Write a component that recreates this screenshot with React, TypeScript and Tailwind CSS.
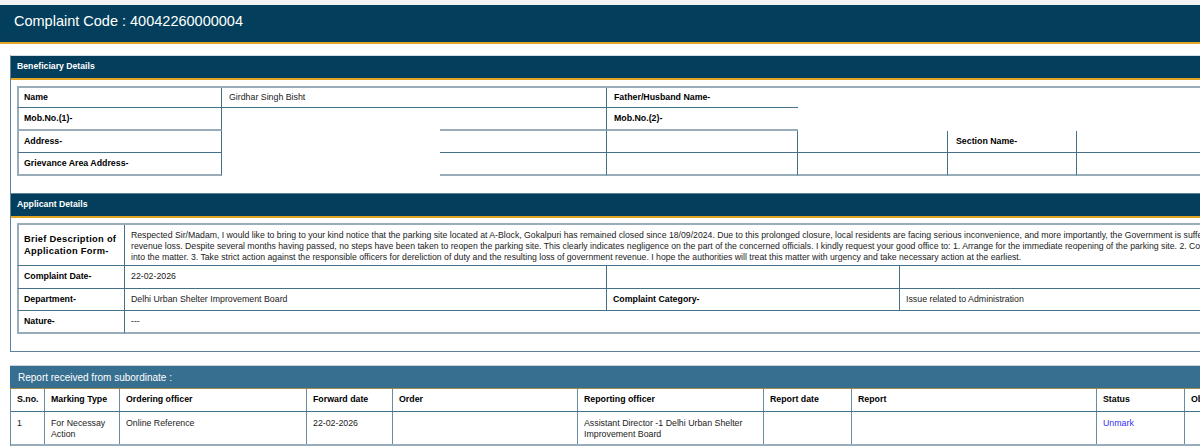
import React from 'react';

// Borders used by the legacy detail tables
const TEAL_B = 'border-b border-b-[#44708a]';
const GREY_B = 'border-b-2 border-b-[#98adb9]';
const TEAL_R = 'border-r border-r-[#44708a]';
const GREY_L = 'border-l-2 border-l-[#98adb9]';

const descriptionLines = [
  'Respected Sir/Madam, I would like to bring to your kind notice that the parking site located at A-Block, Gokalpuri has remained closed since 18/09/2024. Due to this prolonged closure, local residents are facing serious inconvenience, and more importantly, the Government is suffering',
  'revenue loss. Despite several months having passed, no steps have been taken to reopen the parking site. This clearly indicates negligence on the part of the concerned officials. I kindly request your good office to: 1. Arrange for the immediate reopening of the parking site. 2. Conduct an inquiry',
  'into the matter. 3. Take strict action against the responsible officers for dereliction of duty and the resulting loss of government revenue. I hope the authorities will treat this matter with urgency and take necessary action at the earliest.',
];

const reportHeaders = [
  'S.no.',
  'Marking Type',
  'Ordering officer',
  'Forward date',
  'Order',
  'Reporting officer',
  'Report date',
  'Report',
  'Status',
  'Observation',
];

function Cell({ className = '', children }: { className?: string; children?: React.ReactNode }) {
  return <div className={`flex items-center pl-[7px] ${className}`}>{children}</div>;
}

function Label({ children }: { children: React.ReactNode }) {
  return <span className="font-bold text-black">{children}</span>;
}

function PanelHeader({ title }: { title: string }) {
  return (
    <div className="h-[24px] bg-[#033f5c] border-b-2 border-[#e2a523] flex items-center pl-[6px]">
      <span className="text-[8.7px] font-bold text-white">{title}</span>
    </div>
  );
}

function BeneficiaryTable() {
  return (
    <div className="grid grid-cols-[205px_218px_167px_191px_150px_129px_240px] grid-rows-[20px_23px_22px_23px] border-t-2 border-[#98adb9] text-[8.8px]">
      {/* row 1 */}
      <Cell className={`${GREY_L} ${TEAL_R} ${TEAL_B} !pl-[5px]`}>
        <Label>Name</Label>
      </Cell>
      <Cell className={`col-span-2 ${TEAL_R} ${TEAL_B}`}>Girdhar Singh Bisht</Cell>
      <Cell className={TEAL_B}>
        <Label>Father/Husband Name-</Label>
      </Cell>
      <Cell />
      <Cell />
      <Cell />

      {/* row 2 */}
      <Cell className={`${GREY_L} ${TEAL_R} ${GREY_B} !pl-[5px]`}>
        <Label>Mob.No.(1)-</Label>
      </Cell>
      <Cell />
      <Cell className={`${TEAL_R} ${GREY_B}`} />
      <Cell className={GREY_B}>
        <Label>Mob.No.(2)-</Label>
      </Cell>
      <Cell />
      <Cell />
      <Cell />

      {/* row 3 */}
      <Cell className={`${GREY_L} ${TEAL_R} ${TEAL_B} !pl-[5px]`}>
        <Label>Address-</Label>
      </Cell>
      <Cell />
      <Cell className={`${TEAL_R} ${TEAL_B}`} />
      <Cell className={`${TEAL_R} ${TEAL_B}`} />
      <Cell className={`${TEAL_R} ${TEAL_B}`} />
      <Cell className={`${TEAL_R} ${TEAL_B} !pl-[8px]`}>
        <Label>Section Name-</Label>
      </Cell>
      <Cell className={TEAL_B} />

      {/* row 4 */}
      <Cell className={`${GREY_L} ${TEAL_R} ${GREY_B} !pl-[5px]`}>
        <Label>Grievance Area Address-</Label>
      </Cell>
      <Cell />
      <Cell className={`${TEAL_R} ${GREY_B}`} />
      <Cell className={`${TEAL_R} ${GREY_B}`} />
      <Cell className={`${TEAL_R} ${GREY_B}`} />
      <Cell className={`${TEAL_R} ${GREY_B}`} />
      <Cell className={GREY_B} />
    </div>
  );
}

function ApplicantTable() {
  return (
    <div className="grid grid-cols-[108px_482px_293px_360px] grid-rows-[41px_23px_22px_23px] border-t-2 border-[#98adb9] text-[8.8px]">
      <div className={`${GREY_L} ${TEAL_R} ${TEAL_B} flex items-center pl-[5px]`}>
        <span className="font-bold text-black text-[9.3px] tracking-[0.3px] leading-[12.3px]">
          Brief Description of
          <br />
          Application Form-
        </span>
      </div>
      <div className={`col-span-3 ${TEAL_B} flex flex-col justify-center pt-[3px] pl-[6px] text-[8.7px] leading-[10.7px]`}>
        {descriptionLines.map((line) => (
          <span key={line} className="whitespace-nowrap">
            {line}
          </span>
        ))}
      </div>

      <Cell className={`${GREY_L} ${TEAL_R} ${TEAL_B} !pl-[5px]`}>
        <Label>Complaint Date-</Label>
      </Cell>
      <Cell className={`${TEAL_R} ${TEAL_B} !pl-[6px]`}>22-02-2026</Cell>
      <Cell className={`${TEAL_R} ${TEAL_B} !pl-[6px]`} />
      <Cell className={`${TEAL_B} !pl-[6px]`} />

      <Cell className={`${GREY_L} ${TEAL_R} ${TEAL_B} !pl-[5px]`}>
        <Label>Department-</Label>
      </Cell>
      <Cell className={`${TEAL_R} ${TEAL_B} !pl-[6px]`}>Delhi Urban Shelter Improvement Board</Cell>
      <Cell className={`${TEAL_R} ${TEAL_B} !pl-[6px]`}>
        <Label>Complaint Category-</Label>
      </Cell>
      <Cell className={`${TEAL_B} !pl-[6px]`}>Issue related to Administration</Cell>

      <Cell className={`${GREY_L} ${TEAL_R} ${GREY_B} !pl-[5px]`}>
        <Label>Nature-</Label>
      </Cell>
      <Cell className={`col-span-3 ${GREY_B} !pl-[6px]`}>---</Cell>
    </div>
  );
}

function ReportTable() {
  const cols = 'grid grid-cols-[34px_75px_187px_86px_185px_186px_88px_245px_88px_120px]';
  const cell = 'border-r border-[#6a8ca1] pl-[6px]';
  return (
    <div className="border-l border-[#6a8ca1] text-[8.8px]">
      <div className={`${cols} h-[23px] border-b border-[#44708a]`}>
        {reportHeaders.map((h) => (
          <div key={h} className={`${cell} flex items-center font-bold text-black`}>
            {h}
          </div>
        ))}
      </div>
      <div className={`${cols} h-[34px] border-b-2 border-[#98adb9] leading-[11px]`}>
        <div className={`${cell} pt-[6px]`}>1</div>
        <div className={`${cell} pt-[6px]`}>
          For Necessay
          <br />
          Action
        </div>
        <div className={`${cell} pt-[6px]`}>Online Reference</div>
        <div className={`${cell} pt-[6px]`}>22-02-2026</div>
        <div className={`${cell} pt-[6px]`} />
        <div className={`${cell} pt-[6px]`}>
          Assistant Director -1 Delhi Urban Shelter
          <br />
          Improvement Board
        </div>
        <div className={`${cell} pt-[6px]`} />
        <div className={`${cell} pt-[6px]`} />
        <div className={`${cell} pt-[6px]`}>
          <a className="text-[#3434f5]">Unmark</a>
        </div>
        <div className={`${cell} pt-[6px]`} />
      </div>
    </div>
  );
}

export default function App() {
  return (
    <div className="w-[1200px] h-[447px] overflow-hidden bg-white text-[#222] font-['Liberation_Sans',Arial,sans-serif]">
      <div className="w-[1420px]">
        <div className="h-[5px] bg-[#f3f3f3]" />
        <header className="h-[39px] bg-[#033f5c] border-b-2 border-[#e2a523] pt-[6px] pl-[14px]">
          <h1 className="text-[14.5px] text-white">Complaint Code : 40042260000004</h1>
        </header>

        <section className="mt-[11px] ml-[10px] border-t border-t-[#d4dde3] border-l border-b border-[#5c8399]">
          <PanelHeader title="Beneficiary Details" />
          <div className="pt-[6px] pb-[17px] pl-[6px]">
            <BeneficiaryTable />
          </div>
        </section>

        <section className="ml-[10px] border-l border-b border-[#5c8399]">
          <PanelHeader title="Applicant Details" />
          <div className="pt-[5px] pb-[17px] pl-[6px]">
            <ApplicantTable />
          </div>
        </section>

        <section className="mt-[13px] ml-[10px]">
          <div className="h-[24px] bg-[#366f90] border-b border-[#a08c4e] border-t border-t-[#c9d3d9] flex items-center pl-[8px]">
            <span className="text-[10px] text-white">Report received from subordinate :</span>
          </div>
          <ReportTable />
        </section>
      </div>
    </div>
  );
}
